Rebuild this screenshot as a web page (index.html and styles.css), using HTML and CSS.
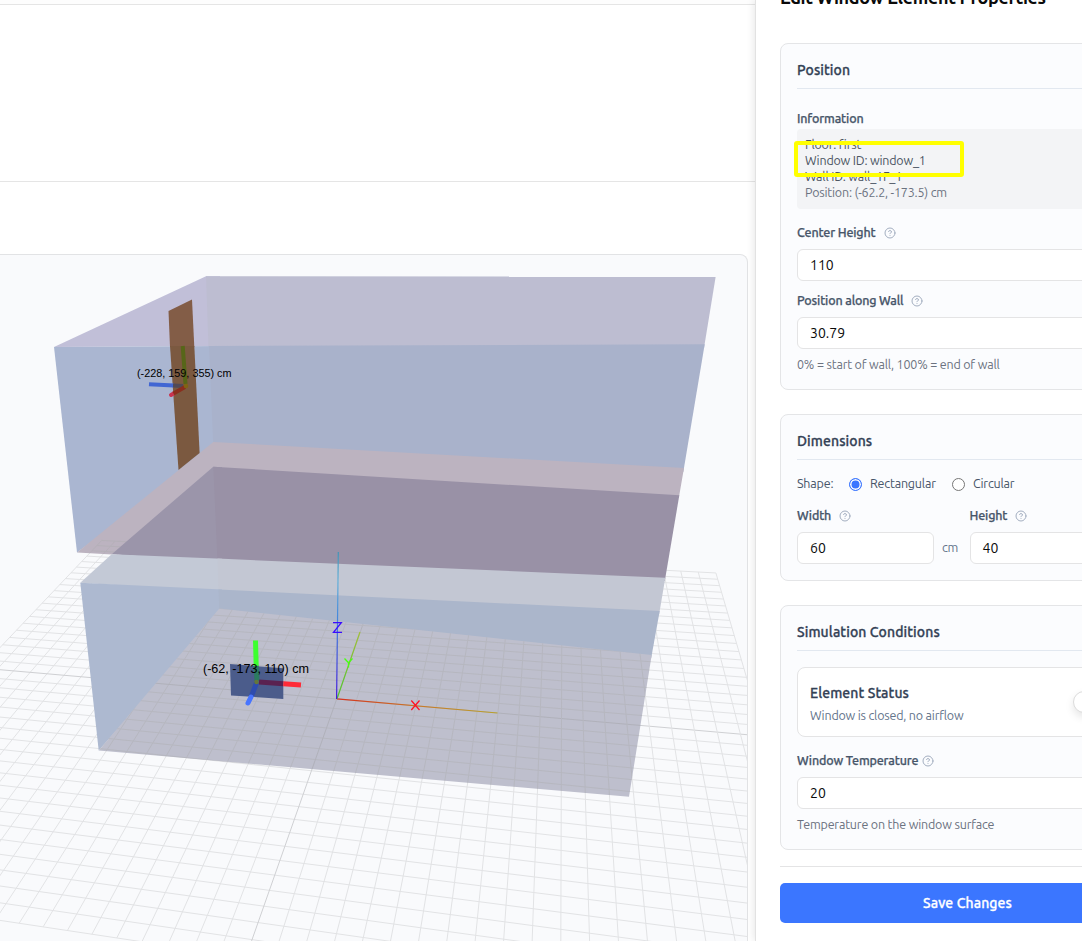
FILE: index.html
```html
<!DOCTYPE html>
<html lang="en">
<head>
<meta charset="utf-8">
<title>Edit Window Element Properties</title>
<link rel="stylesheet" href="styles.css">
</head>
<body>
<svg width="0" height="0" class="defs" aria-hidden="true">
  <symbol id="help" viewBox="0 0 24 24"><circle cx="12" cy="12" r="10"/><path d="M9.09 9a3 3 0 0 1 5.83 1c0 2-3 3-3 3M12 17h.01"/></symbol>
</svg>
<div class="app">
  <main class="workspace">
    <div class="strip strip-top"></div>
    <div class="strip strip-info"></div>
    <div class="strip strip-tools"></div>
    <div class="viewer">
      <svg class="scene" viewBox="0 255 747 686" width="747" height="686">
        <defs>
          <clipPath id="floorClip"><path d="M98.7 750.5L219.3 608.5 651.7 655 629 796.8z"/></clipPath>
          <clipPath id="cornerClip"><path d="M77 552.5L213 442 213 467 112 554.5z"/></clipPath>
          <linearGradient id="gx" gradientUnits="userSpaceOnUse" x1="337" y1="698" x2="497" y2="713"><stop offset="0" stop-color="#d6321e"/><stop offset=".5" stop-color="#c87828"/><stop offset="1" stop-color="#b9a12d"/></linearGradient>
          <linearGradient id="gy" gradientUnits="userSpaceOnUse" x1="337" y1="698" x2="360" y2="632"><stop offset="0" stop-color="#4fc72e"/><stop offset="1" stop-color="#a1bf37"/></linearGradient>
          <linearGradient id="gz" gradientUnits="userSpaceOnUse" x1="337" y1="698" x2="338" y2="552"><stop offset="0" stop-color="#4218dc"/><stop offset=".5" stop-color="#3f7fdc"/><stop offset=".8" stop-color="#62b0d9"/><stop offset="1" stop-color="#3f94b8"/></linearGradient>
        </defs>
        <g class="grid" id="grid"></g>
        <!-- upper storey -->
        <path fill="#c1bfd8" d="M54 347L206 276.3 220 276.3 220 346z"/>
        <path fill="#bdbdd1" d="M206 276.3L715.7 276.6 704 348 208.5 348z"/>
        <path fill="#aab6d1" d="M54 347L220 346 220 447 77 552.5z"/>
        <path fill="#a9b2cb" d="M209 346L704.7 344.2 683.3 472 213.3 446z"/>
        <path fill="#bcb3c0" d="M77 552.5L213.3 442 684 468 678.8 498 220 470 112 554.5z"/>
        <g class="grid-faint" clip-path="url(#cornerClip)"><use href="#grid"/></g>
        <path fill="#9b95aa" d="M213.3 466.7L222 467.2 222 562 111.7 554.2z"/>
        <path fill="#9991a6" d="M213.3 466.7L679.3 495.3 664.8 581 217.5 562z"/>
        <!-- lower storey -->
        <path fill="#c3c9d6" d="M111.7 554.2L222 558.8 222 592 80.3 582.7z"/>
        <path fill="#c3c7d3" d="M217.5 558.6L665.3 577.7 659.2 614 218.5 592z"/>
        <path fill="#adb9d0" d="M80.3 582.7L222 589.6 222 612 98.7 750.5z"/>
        <path fill="#abb6cb" d="M218.5 589.5L659.7 611 651.2 658 219.3 612z"/>
        <path fill="#bebfcd" d="M98.7 750.5L219.3 608.5 651.7 655 629 796.8z"/>
        <g class="grid-faint" clip-path="url(#floorClip)"><use href="#grid"/></g>
        <!-- door and its gizmo -->
        <path fill="#835d47" d="M168.5 311L192 299.5 194.3 347 170 347z"/>
        <path fill="#7b5940" d="M170 346L194.3 346 199.6 453 178.5 470z"/>
        <g class="arrow">
          <path stroke="#576619" d="M182.7 346L185.5 384"/>
          <path stroke="#4166d3" d="M149 384.2L174 385.6"/>
          <path stroke="#514a57" d="M173 385.5L183 386"/>
          <path stroke="#c93350" stroke-linecap="round" d="M171 395L174 393.2"/>
          <path stroke="#8a2e1d" d="M173.5 393.5L185 387"/>
          <circle cx="186" cy="386" r="2.3" fill="#806313"/>
        </g>
        <text class="tag" x="137" y="377" font-size="11" textLength="94.5" lengthAdjust="spacingAndGlyphs">(-228, 159, 355) cm</text>
        <!-- window and its gizmo -->
        <path fill="#4b5c8b" d="M230 664L283.3 668.3 283.3 699 231 695.4z"/>
        <g class="arrow arrow-big">
          <path stroke="#3dff2f" d="M255.5 640.5L256.2 666"/>
          <path stroke="#2c7b60" d="M256.2 666L257 681"/>
          <path stroke="#5a2250" d="M259 682L283.3 683.7"/>
          <path stroke="#ff2b38" d="M283.3 683.7L301 685"/>
          <path stroke="#2e4caf" d="M256.5 683L251.5 696"/>
          <path stroke="#4875ff" stroke-linecap="round" d="M251 697L248 703"/>
          <circle cx="256.5" cy="682" r="2.2" fill="#657638"/>
        </g>
        <text class="tag" x="203" y="673" font-size="12" textLength="106" lengthAdjust="spacingAndGlyphs">(-62, -173, 110) cm</text>
        <!-- world axes -->
        <path stroke="url(#gx)" class="axis" d="M337 698.8L497.5 713"/>
        <path stroke="url(#gy)" class="axis" d="M337 698.8L360 632"/>
        <path stroke="url(#gz)" class="axis" d="M336.6 699L338.3 552"/>
        <g fill="none" stroke-width="1.3">
          <path stroke="#3b0cff" d="M333 622.7H341.3L333.5 632.3H342"/>
          <path stroke="#48ff12" d="M344.5 658.5L348.5 662.8 352.5 658.5M348.5 662.8V667.5"/>
          <path stroke="#ff1226" d="M411.3 700.5L419.5 710M419.5 700.5L411.3 710"/>
        </g>
      </svg>
    </div>
  </main>

  <aside class="panel">
    <h2 class="title"><span class="title-text">Edit Window Element Properties</span></h2>

    <section class="card card-position">
      <h3 class="card-head">Position</h3>
      <div class="label label-info">Information</div>
      <div class="info">
        <div>Floor: first</div>
        <div>Window ID: window_1</div>
        <div>Wall ID: wall_1F_1</div>
        <div class="muted">Position: (-62.2, -173.5) cm</div>
        <div class="marker"></div>
      </div>
      <div class="label label-center">Center Height <svg class="help"><use href="#help"/></svg></div>
      <div class="input">110</div>
      <div class="label">Position along Wall <svg class="help"><use href="#help"/></svg></div>
      <div class="input">30.79</div>
      <p class="hint">0% = start of wall, 100% = end of wall</p>
    </section>

    <section class="card card-dimensions">
      <h3 class="card-head">Dimensions</h3>
      <div class="shape">
        <span class="shape-name">Shape:</span>
        <span class="radio radio-on"></span><span class="rect-name">Rectangular</span>
        <span class="radio"></span><span class="circ-name">Circular</span>
      </div>
      <div class="sizes">
        <div>
          <div class="label">Width <svg class="help"><use href="#help"/></svg></div>
          <div class="measure"><div class="input">60</div><span>cm</span></div>
        </div>
        <div>
          <div class="label">Height <svg class="help"><use href="#help"/></svg></div>
          <div class="measure"><div class="input">40</div></div>
        </div>
      </div>
    </section>

    <section class="card card-simulation">
      <h3 class="card-head">Simulation Conditions</h3>
      <div class="status">
        <div>
          <div class="status-name">Element Status</div>
          <div class="status-text">Window is closed, no airflow</div>
        </div>
        <div class="switch"><span class="knob"></span></div>
      </div>
      <div class="label label-temp">Window Temperature <svg class="help"><use href="#help"/></svg></div>
      <div class="input">20</div>
      <p class="hint">Temperature on the window surface</p>
    </section>

    <div class="actions"><div class="save">Save Changes</div></div>
  </aside>
</div>
<script src="grid.js"></script>
</body>
</html>
```
FILE: styles.css
```css
* { box-sizing: border-box; }
body {
  margin: 0;
  height: 941px;
  overflow: hidden;
  background: #fff;
  font-family: Ubuntu, "Noto Sans", "Open Sans", sans-serif;
  color: #475569;
}
.defs { position: absolute; }
.app { display: flex; width: 1082px; height: 941px; overflow: hidden; }

.workspace { width: 755px; flex: none; display: flex; flex-direction: column; }
.strip { border-bottom: 1px solid #e5e5e5; flex: none; }
.strip-top { height: 5px; background: #fdfdfd; }
.strip-info { height: 177px; }
.strip-tools { height: 72px; border: 0; }
.viewer {
  width: 748px;
  height: 700px;
  flex: none;
  border: 1px solid #e2e3e5;
  border-left: 0;
  border-radius: 0 8px 0 0;
  background: #f9fafc;
  overflow: hidden;
}
.scene { display: block; }
.grid { stroke: #e2e3e5; stroke-width: 1; fill: none; }
.grid .center { stroke: #cfd0d3; }
.grid-faint { filter: brightness(.76); opacity: .42; }
.arrow { fill: none; stroke-width: 4; }
.arrow circle { stroke: none; }
.arrow-big { stroke-width: 5; }
.axis { fill: none; stroke-width: 1.2; }
.tag { font-family: "Liberation Sans", Arial, sans-serif; fill: #000; }

.panel {
  width: 425px;
  flex: none;
  height: 941px;
  padding: 0 24px;
  border-left: 1px solid #e2e2e2;
  background: #fff;
  box-shadow: -1px 0 8px rgba(0, 0, 0, .1);
  position: relative;
}
.title {
  display: flex;
  margin: 0;
  height: 43px;
  font-size: 18px;
  line-height: 20px;
  font-weight: 700;
  letter-spacing: -.34px;
  color: #0a0a0a;
  white-space: nowrap;
}
.title-text { display: block; margin-top: -13px; }
.card {
  width: 375px;
  padding: 16px;
  border: 1px solid #e4e5e7;
  border-radius: 8px;
  background: #fbfcfe;
  margin-bottom: 24px;
  white-space: nowrap;
}
.card-position { height: 347px; }
.card-dimensions { height: 167px; }
.card-simulation { height: 245px; margin-bottom: 16px; }
.card-head,
.status-name,
.save {
  font-size: 14px;
  line-height: 20px;
  font-weight: 500;
  letter-spacing: .1px;
  -webkit-text-stroke: .3px currentColor;
}
.card-head {
  margin: 0;
  height: 29px;
  border-bottom: 1px solid #e2e8f0;
  color: #334155;
}
.label {
  display: flex;
  align-items: flex-start;
  gap: 8px;
  height: 16px;
  margin: 12px 0 8px;
  font-size: 12.5px;
  line-height: 14px;
  letter-spacing: -.16px;
  font-weight: 500;
  -webkit-text-stroke: .25px currentColor;
  color: #475569;
}
.label-info { margin: 22px 0 2px; }
.label-center { margin-top: 16px; }
.help {
  width: 12px;
  height: 12px;
  margin-top: 2px;
  flex: none;
  fill: none;
  stroke: #a3aec0;
  stroke-width: 2;
  stroke-linecap: round;
  stroke-linejoin: round;
}
.info {
  position: relative;
  height: 80px;
  padding: 7px 8px;
  border-radius: 4px;
  background: #f3f4f6;
  font-size: 12.5px;
  line-height: 16px;
  letter-spacing: -.2px;
  color: #4b5563;
}
.muted { color: #6b7280; }
.marker {
  position: absolute;
  left: -3px;
  top: 12px;
  width: 170px;
  height: 36px;
  border: 4px solid #ff0;
  border-radius: 3px;
}
.input {
  height: 32px;
  padding: 0 12px;
  border: 1px solid #e4e4e5;
  border-radius: 6px;
  background: #fff;
  font-size: 14px;
  line-height: 30px;
  letter-spacing: 0;
  color: #0a0a0a;
}
.hint { margin: 7px 0 0; font-size: 12.5px; line-height: 16px; letter-spacing: -.18px; color: #6b7280; }

.shape {
  display: flex;
  align-items: center;
  height: 16px;
  margin: 15px 0 17px;
  font-size: 12.5px;
  line-height: 16px;
  letter-spacing: -.18px;
}
.shape-name { width: 52px; }
.rect-name { width: 82px; margin-left: 8px; }
.circ-name { margin-left: 8px; }
.radio {
  width: 13px;
  height: 13px;
  margin-top: 2px;
  border: 1px solid #767676;
  border-radius: 50%;
  background: #fff;
}
.radio-on { border: 1.5px solid #3b76ff; background: #3b76ff; box-shadow: inset 0 0 0 1.5px #fff; }
.sizes { display: grid; grid-template-columns: 164.5px 164.5px; gap: 8px; }
.sizes .label { margin-top: 0; }
.measure { display: flex; align-items: center; gap: 8px; font-size: 12.5px; line-height: 16px; letter-spacing: -.2px; color: #64748b; }
.measure span { padding-bottom: 2px; }
.measure .input { width: 137px; flex: none; }

.status {
  display: flex;
  justify-content: space-between;
  align-items: center;
  height: 70px;
  margin-top: 16px;
  padding: 2px 12px 0;
  border: 1px solid #e4e4e5;
  border-radius: 8px;
  background: #fff;
}
.status-name { color: #334155; }
.status-text { margin: 4px 0 1px; font-size: 12.5px; line-height: 16px; letter-spacing: -.2px; color: #64748b; }
.switch { width: 52px; height: 24px; display: flex; }
.knob {
  width: 22px;
  height: 22px;
  border: 1px solid #dcdcdc;
  border-radius: 50%;
  background: #fff;
  box-shadow: 0 4px 8px rgba(0, 0, 0, .1);
}
.label-temp { margin-top: 16px; gap: 4px; }
.actions { width: 375px; padding-top: 16px; border-top: 1px solid #e4e4e5; }
.save {
  height: 40px;
  border-radius: 5px;
  background: #3b76ff;
  color: #fff;
  line-height: 40px;
  text-align: center;
}
```
FILE: grid.js
```js
// Ground plane: 40 x 40 cells, projected to the viewport.
const HALF = 20;
const project = (i, j) => {
  const gi = -0.00453 * i, hj = 0.0143 * j, w = 1 + gi + hj;
  return [(336.7 + gi * -3950 + hj * 563.6) / w, (699 + gi * 326 + hj * 54) / w];
};
const grid = document.getElementById('grid');
const addLine = (a, b, center) => {
  const line = document.createElementNS('http://www.w3.org/2000/svg', 'line');
  line.setAttribute('x1', a[0]);
  line.setAttribute('y1', a[1]);
  line.setAttribute('x2', b[0]);
  line.setAttribute('y2', b[1]);
  if (center) line.setAttribute('class', 'center');
  grid.appendChild(line);
};
for (let k = -HALF; k <= HALF; k++) {
  addLine(project(k, -HALF), project(k, HALF), k === 0);
  addLine(project(-HALF, k), project(HALF, k), k === 0);
}
```
